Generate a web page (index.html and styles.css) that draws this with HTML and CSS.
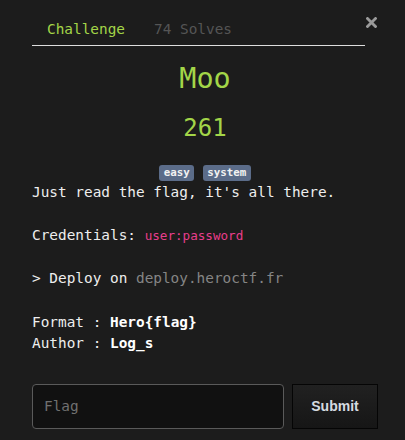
FILE: index.html
```html
<!DOCTYPE html>
<html>
<head>
<meta charset="utf-8">
<link rel="stylesheet" href="styles.css">
</head>
<body>
<div class="modal">
  <button class="close" aria-label="Close">
    <svg width="11" height="11" viewBox="0 0 11 11"><path d="M1.5 1.5 L9.5 9.5 M9.5 1.5 L1.5 9.5" stroke="#9a9a9a" stroke-width="2.8" stroke-linecap="square"/></svg>
  </button>
  <nav class="tabs">
    <span class="tab active">Challenge</span>
    <span class="tab">74 Solves</span>
  </nav>
  <h3 class="title">Moo</h3>
  <h4 class="value">261</h4>
  <div class="tags">
    <span class="badge">easy</span>
    <span class="badge">system</span>
  </div>
  <div class="desc">
    <p>Just read the flag, it's all there.</p>
    <p>Credentials: <code class="cred">user:password</code></p>
    <p>&gt; Deploy on <span class="host">deploy.heroctf.fr</span></p>
    <p>Format : <strong>Hero{flag}</strong><br>Author : <strong>Log_s</strong></p>
  </div>
  <form class="submit-row">
    <input class="flag" type="text" placeholder="Flag">
    <button class="btn" type="button">Submit</button>
  </form>
</div>
</body>
</html>
```

FILE: styles.css
```css
html, body {
  margin: 0;
  padding: 0;
  background: #1c1c1c;
}
body {
  font-family: "DejaVu Sans Mono", monospace;
  font-size: 14.4px;
  line-height: 21.6px;
  color: #eeeeee;
}
.modal {
  position: relative;
  width: 405px;
  height: 440px;
  padding: 18px 0 0 32px;
  box-sizing: border-box;
}
.close {
  position: absolute;
  left: 366px;
  top: 17px;
  width: 11px;
  height: 11px;
  padding: 0;
  border: 0;
  background: none;
  display: block;
}
.close svg { display: block; }
.tabs {
  display: flex;
  width: 333px;
  border-bottom: 1px solid #dddddd;
}
.tab {
  padding: 0 16px 5px 15px;
  line-height: 22px;
  color: #555555;
}
.tab.active {
  padding-right: 14px;
  color: #a3d548;
}
.title {
  margin: 15.5px 0 0 0;
  width: 346px;
  text-align: center;
  font-size: 28.5px;
  line-height: 33.6px;
  font-weight: normal;
  color: #a3d548;
}
.value {
  margin: 19px 0 0 0;
  width: 346px;
  text-align: center;
  font-size: 24px;
  line-height: 28.8px;
  font-weight: normal;
  color: #a3d548;
}
.tags {
  display: flex;
  justify-content: center;
  gap: 9px;
  width: 346px;
  margin-top: 22px;
}
.badge {
  display: inline-block;
  font-size: 10.8px;
  line-height: 10.8px;
  font-weight: bold;
  padding: 2.7px 4.3px;
  border-radius: 3px;
  background: #5b6c89;
  color: #f2f2f2;
}
.desc {
  padding-top: 1px;
}
.desc p {
  margin: 0 0 21.6px 0;
}
.desc p:last-child {
  margin-bottom: 0;
}
.cred {
  font-family: "DejaVu Sans Mono", monospace;
  font-size: 12.6px;
  color: #e83e8c;
}
.host {
  color: #858585;
}
strong {
  font-weight: bold;
  color: #ffffff;
}
.submit-row {
  display: flex;
  gap: 8px;
  margin-top: 29px;
  width: 346px;
}
.flag {
  width: 252px;
  height: 45px;
  box-sizing: border-box;
  border: 1px solid #5a5a5a;
  border-radius: 4px;
  background: #111111;
  padding: 0 11px;
  font-family: "DejaVu Sans Mono", monospace;
  font-size: 14.4px;
  color: #eeeeee;
}
.flag::placeholder {
  color: #707070;
}
.btn {
  width: 86px;
  height: 45px;
  box-sizing: border-box;
  border: 1px solid #050505;
  background: linear-gradient(#212121, #161616);
  font-family: "Liberation Sans", Arial, sans-serif;
  font-weight: bold;
  font-size: 14px;
  color: #d6dbe0;
  padding: 0;
}
```
